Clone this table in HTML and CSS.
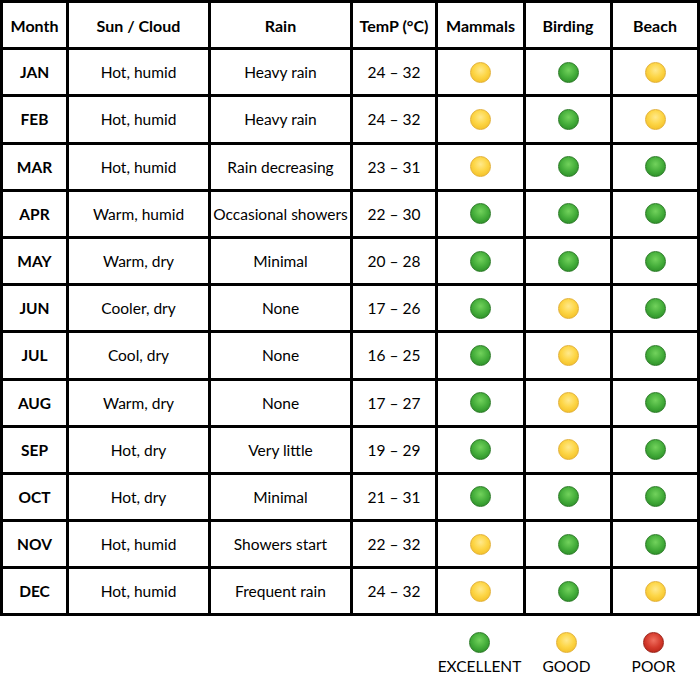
FILE: index.html
```html
<!DOCTYPE html>
<html>
<head>
<meta charset="utf-8">
<link rel="stylesheet" href="styles.css">
</head>
<body>
<div class="table">
  <div class="cell head">Month</div><div class="cell head">Sun / Cloud</div><div class="cell head">Rain</div><div class="cell head">TemP (°C)</div><div class="cell head">Mammals</div><div class="cell head">Birding</div><div class="cell head">Beach</div>

  <div class="cell month">JAN</div><div class="cell">Hot, humid</div><div class="cell">Heavy rain</div><div class="cell">24 – 32</div><div class="cell"><span class="dot good"></span></div><div class="cell"><span class="dot exc"></span></div><div class="cell"><span class="dot good"></span></div>

  <div class="cell month">FEB</div><div class="cell">Hot, humid</div><div class="cell">Heavy rain</div><div class="cell">24 – 32</div><div class="cell"><span class="dot good"></span></div><div class="cell"><span class="dot exc"></span></div><div class="cell"><span class="dot good"></span></div>

  <div class="cell month">MAR</div><div class="cell">Hot, humid</div><div class="cell">Rain decreasing</div><div class="cell">23 – 31</div><div class="cell"><span class="dot good"></span></div><div class="cell"><span class="dot exc"></span></div><div class="cell"><span class="dot exc"></span></div>

  <div class="cell month">APR</div><div class="cell">Warm, humid</div><div class="cell">Occasional showers</div><div class="cell">22 – 30</div><div class="cell"><span class="dot exc"></span></div><div class="cell"><span class="dot exc"></span></div><div class="cell"><span class="dot exc"></span></div>

  <div class="cell month">MAY</div><div class="cell">Warm, dry</div><div class="cell">Minimal</div><div class="cell">20 – 28</div><div class="cell"><span class="dot exc"></span></div><div class="cell"><span class="dot exc"></span></div><div class="cell"><span class="dot exc"></span></div>

  <div class="cell month">JUN</div><div class="cell">Cooler, dry</div><div class="cell">None</div><div class="cell">17 – 26</div><div class="cell"><span class="dot exc"></span></div><div class="cell"><span class="dot good"></span></div><div class="cell"><span class="dot exc"></span></div>

  <div class="cell month">JUL</div><div class="cell">Cool, dry</div><div class="cell">None</div><div class="cell">16 – 25</div><div class="cell"><span class="dot exc"></span></div><div class="cell"><span class="dot good"></span></div><div class="cell"><span class="dot exc"></span></div>

  <div class="cell month">AUG</div><div class="cell">Warm, dry</div><div class="cell">None</div><div class="cell">17 – 27</div><div class="cell"><span class="dot exc"></span></div><div class="cell"><span class="dot good"></span></div><div class="cell"><span class="dot exc"></span></div>

  <div class="cell month">SEP</div><div class="cell">Hot, dry</div><div class="cell">Very little</div><div class="cell">19 – 29</div><div class="cell"><span class="dot exc"></span></div><div class="cell"><span class="dot good"></span></div><div class="cell"><span class="dot exc"></span></div>

  <div class="cell month">OCT</div><div class="cell">Hot, dry</div><div class="cell">Minimal</div><div class="cell">21 – 31</div><div class="cell"><span class="dot exc"></span></div><div class="cell"><span class="dot exc"></span></div><div class="cell"><span class="dot exc"></span></div>

  <div class="cell month">NOV</div><div class="cell">Hot, humid</div><div class="cell">Showers start</div><div class="cell">22 – 32</div><div class="cell"><span class="dot good"></span></div><div class="cell"><span class="dot exc"></span></div><div class="cell"><span class="dot exc"></span></div>

  <div class="cell month">DEC</div><div class="cell">Hot, humid</div><div class="cell">Frequent rain</div><div class="cell">24 – 32</div><div class="cell"><span class="dot good"></span></div><div class="cell"><span class="dot exc"></span></div><div class="cell"><span class="dot good"></span></div>
</div>

<div class="legend">
  <div class="legend-item"><span class="dot exc"></span><span class="label">EXCELLENT</span></div>
  <div class="legend-item"><span class="dot good"></span><span class="label">GOOD</span></div>
  <div class="legend-item"><span class="dot poor"></span><span class="label">POOR</span></div>
</div>
</body>
</html>
```

FILE: styles.css
```css
html, body {
  margin: 0;
  padding: 0;
  background: #fff;
}

body {
  width: 700px;
  height: 700px;
  font-family: Lato, "Open Sans", sans-serif;
  color: #000;
}

.table {
  display: grid;
  grid-template-columns: 63px 139px 139px 82px 85px 84px 84px;
  grid-template-rows: repeat(13, 44.2px);
  gap: 3px;
  padding: 3px;
  background: #000;
}

.cell {
  background: #fff;
  display: flex;
  align-items: center;
  justify-content: center;
  font-size: 15.5px;
  white-space: nowrap;
}

.head {
  font-weight: bold;
  font-size: 16px;
}

.month {
  font-weight: bold;
}

.dot {
  display: inline-block;
  width: 21px;
  height: 21px;
  border-radius: 50%;
  box-sizing: border-box;
}

.dot.good {
  background: radial-gradient(circle at 50% 38%, #ffe98c 0%, #fdd647 45%, #f4c22a 80%, #e0a818 100%);
  border: 1px solid #e2b036;
}

.dot.exc {
  background: radial-gradient(circle at 50% 38%, #72d25c 0%, #44ad3a 50%, #2c8e28 85%, #1d6d1c 100%);
  border: 1px solid #2a7a25;
}

.dot.poor {
  background: radial-gradient(circle at 50% 38%, #f07060 0%, #d43a2c 50%, #b82518 85%, #8c1a10 100%);
  border: 1px solid #9a2218;
}

.legend {
  display: flex;
  justify-content: flex-end;
  padding-top: 16px;
  padding-right: 3px;
}

.legend-item {
  width: 87px;
  display: flex;
  flex-direction: column;
  align-items: center;
  gap: 3px;
}

.legend-item .label {
  font-size: 15.5px;
  line-height: 20px;
}
```
